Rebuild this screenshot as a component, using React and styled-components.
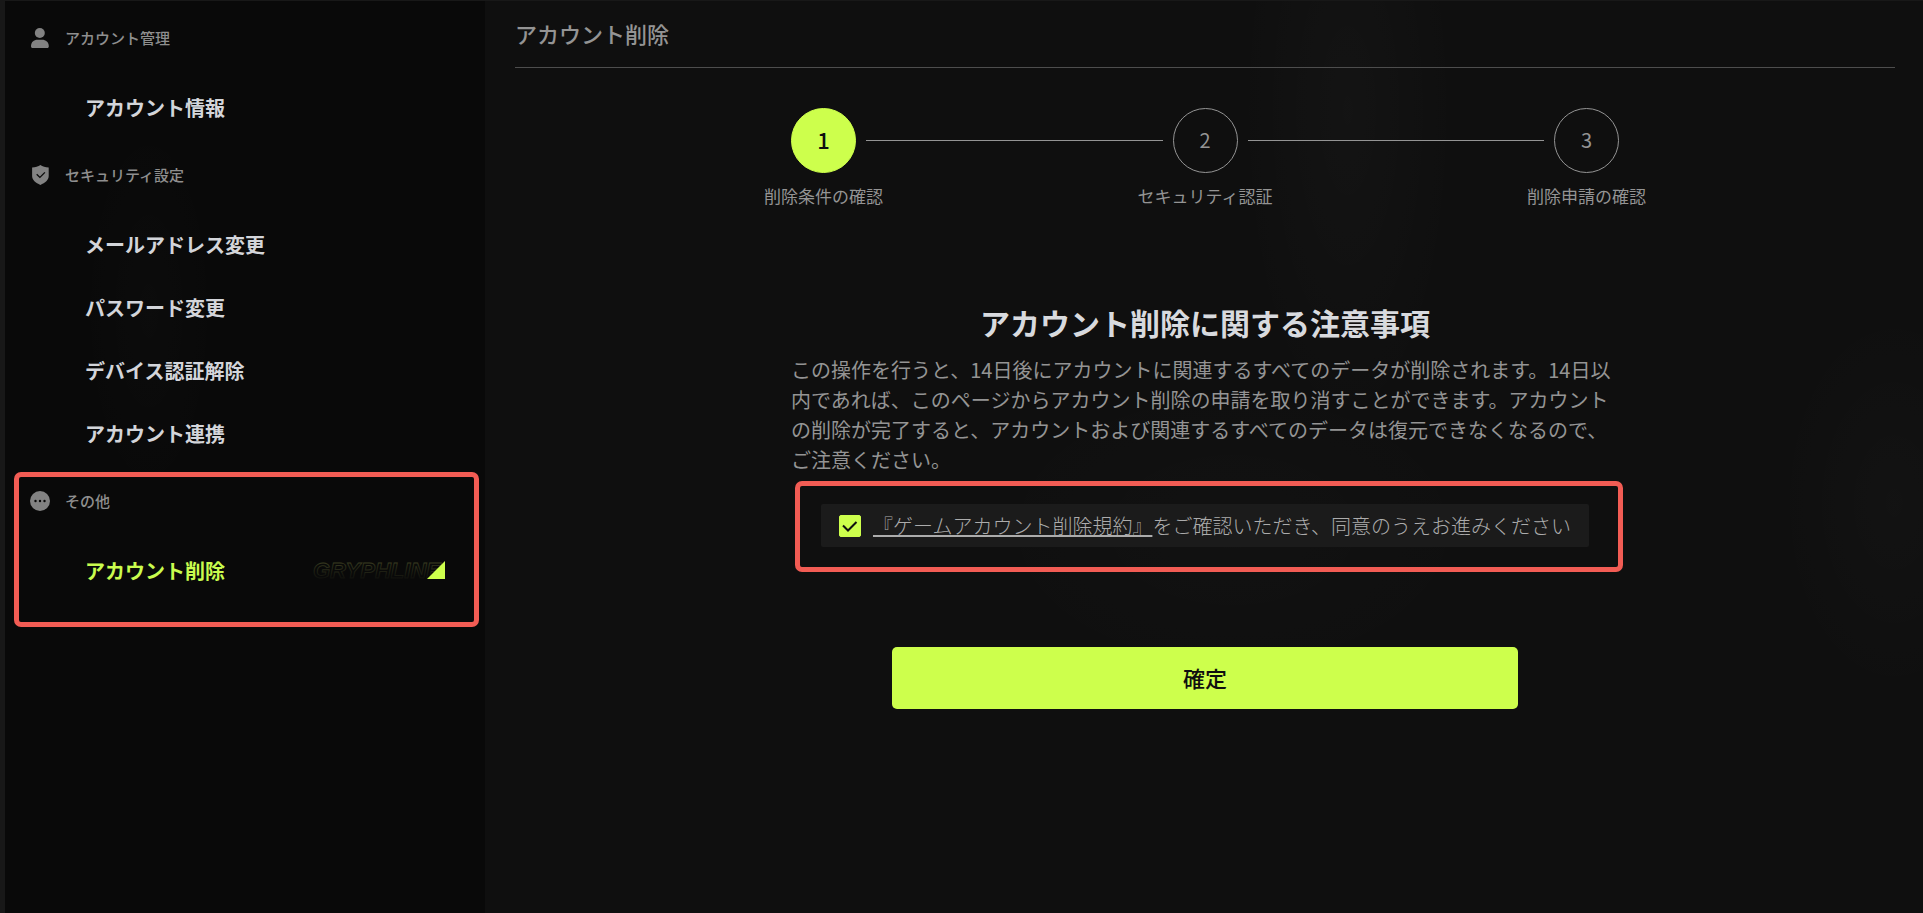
import { useState } from 'react';
import styled, { createGlobalStyle } from 'styled-components';

const GlobalStyle = createGlobalStyle`
  * {
    box-sizing: border-box;
  }
  body {
    margin: 0;
    background: #171717;
    font-family: "Noto Sans CJK JP", "Noto Sans", sans-serif;
  }
`

const Page = styled.div`
  display: flex;
  min-height: 100vh;
  padding: 1px 0 0 5px;
  background: #181818;
`

const Sidebar = styled.nav`
  flex: none;
  width: 480px;
  background:
    radial-gradient(ellipse 70px 200px at 30% 34%, rgba(255, 255, 255, 0.012), transparent),
    #090909;
`

const Section = styled.section`
  position: relative;
`

const SectionTitle = styled.h2`
  display: flex;
  align-items: center;
  gap: 15px;
  height: 75px;
  margin: 0;
  padding: 0 0 2px 25px;
  font-size: 15px;
  font-weight: 500;
  color: #8f8f8f;
`

const Icon = styled.svg`
  flex: none;
  width: 20px;
  height: 20px;
`

const NavList = styled.div`
  display: flex;
  flex-direction: column;
  gap: 1px;
`

const NavItem = styled.a`
  display: flex;
  align-items: center;
  justify-content: space-between;
  height: 62px;
  padding: 0 40px 0 80px;
  font-size: 20px;
  font-weight: 700;
  color: ${props => props.$active ? '#c9fc4e' : '#d3d5da'};
  text-decoration: none;
`

const Mark = styled.svg`
  width: 132px;
  height: 20px;
  overflow: visible;
`

const Highlight = styled.div`
  position: absolute;
  border: 5px solid #f25c54;
  border-radius: 7px;
  pointer-events: none;
`

const SidebarHighlight = styled(Highlight)`
  top: 8px;
  right: 6px;
  bottom: -26px;
  left: 9px;
`

const AgreementHighlight = styled(Highlight)`
  top: -23px;
  right: -4px;
  bottom: -25px;
  left: 4px;
`

const Main = styled.main`
  flex: 1;
  min-width: 0;
  padding: 0 28px 40px 30px;
  background:
    radial-gradient(ellipse 110px 330px at 60% 12%, rgba(255, 255, 255, 0.02), transparent),
    radial-gradient(ellipse 260px 160px at 52% 58%, rgba(255, 255, 255, 0.01), transparent),
    radial-gradient(ellipse 120px 200px at 98% 55%, rgba(255, 255, 255, 0.015), transparent),
    #0f0f0f;
`

const Title = styled.h1`
  display: flex;
  align-items: center;
  height: 67px;
  margin: 0;
  padding-bottom: 3px;
  border-bottom: 1px solid #4d4d4d;
  font-size: 22px;
  font-weight: 500;
  color: #949494;
`

const Content = styled.div`
  max-width: 828px;
  margin: 40px auto 0;
`

const Steps = styled.ol`
  display: flex;
  margin: 0;
  padding: 0;
  list-style: none;
`

const Step = styled.li`
  display: flex;
  flex: ${props => props.$last ? 'none' : '1'};
`

const StepBody = styled.div`
  display: flex;
  flex-direction: column;
  align-items: center;
  gap: 11px;
  width: 65px;
`

const StepCircle = styled.span`
  display: flex;
  align-items: center;
  justify-content: center;
  width: 65px;
  height: 65px;
  padding-bottom: 3px;
  border: 1px solid ${props => props.$active ? '#cdff4c' : '#949494'};
  border-radius: 50%;
  background: ${props => props.$active ? '#cdff4c' : 'transparent'};
  font-size: ${props => props.$active ? '22px' : '20px'};
  font-weight: ${props => props.$active ? '500' : '400'};
  color: ${props => props.$active ? '#0f0f0f' : '#949494'};
`

const StepLabel = styled.span`
  font-size: 17px;
  line-height: 24px;
  color: #949494;
  white-space: nowrap;
`

const StepLine = styled.span`
  flex: 1;
  height: 1px;
  margin: 32px 10px 0;
  background: #949494;
`

const Heading = styled.h2`
  margin: 92px 0 11px;
  font-size: 30px;
  font-weight: 700;
  line-height: 44px;
  color: #d8dade;
  text-align: center;
`

const Notice = styled.p`
  margin: 0;
  font-size: 20px;
  line-height: 30px;
  color: #949494;
`

const AgreementRow = styled.div`
  position: relative;
  display: flex;
  justify-content: center;
  margin-top: 29px;
`

const Agreement = styled.div`
  display: flex;
  align-items: center;
  gap: 12px;
  padding: 0 18px;
  border-radius: 2px;
  background: #1b1b1b;
  font-size: 20px;
  font-weight: 300;
  line-height: 43px;
  color: #acacac;
`

const AgreementLink = styled.a`
  color: inherit;
  text-decoration: underline;
  text-decoration-thickness: 2px;
  text-decoration-skip-ink: none;
  text-underline-offset: 1px;
`

const CheckWrap = styled.span`
  display: grid;
  flex: none;
  width: 22px;
  height: 22px;

  > * {
    grid-area: 1 / 1;
  }
`

const Checkbox = styled.input`
  appearance: none;
  width: 22px;
  height: 22px;
  margin: 0;
  border: 1px solid #cdff4c;
  border-radius: 2px;

  &:checked {
    background: #cdff4c;
  }
`

const CheckMark = styled.svg`
  width: 22px;
  height: 22px;
  pointer-events: none;
`

const SubmitButton = styled.button`
  display: block;
  width: 626px;
  max-width: 100%;
  height: 62px;
  margin: 100px auto 0;
  padding: 0 0 3px;
  border: none;
  border-radius: 5px;
  background: #cdff4c;
  font-family: inherit;
  font-size: 22px;
  font-weight: 500;
  color: #0f0f0f;
  cursor: pointer;

  &:disabled {
    opacity: 0.5;
  }
`

const UserIcon = () => (
  <Icon viewBox="0 0 20 20" fill="#828282" aria-hidden="true">
    <circle cx="9.8" cy="5" r="5" />
    <path d="M1 18.2C1 14 3.8 11.8 7.5 11.8h4.6c3.7 0 6.7 2.2 6.7 6.4 0 1.200-.6 1.800-1.600 1.800H2.600C1.600 20 1 19.400 1 18.200z" />
  </Icon>
)

const ShieldIcon = () => (
  <Icon viewBox="0 0 20 20" aria-hidden="true">
    <path d="M10.4 0C12.5 1.5 15.5 2.3 18.7 2.5V11c0 4-3.500 6.800-8.300 8.900C5.600 17.800 2.100 15 2.100 11V2.500C5.300 2.300 8.300 1.500 10.400 0z" fill="#828282" />
    <path d="M6.7 9.2l3.200 3.200 5-5" fill="none" stroke="#090909" strokeWidth="1.3" />
  </Icon>
)

const MoreIcon = () => (
  <Icon viewBox="0 0 20 20" aria-hidden="true">
    <circle cx="10" cy="10" r="10" fill="#828282" />
    <g fill="#090909">
      <circle cx="5.5" cy="10" r="1.2" />
      <circle cx="10" cy="10" r="1.2" />
      <circle cx="14.5" cy="10" r="1.2" />
    </g>
  </Icon>
)

const ActiveMark = () => (
  <Mark viewBox="0 0 132 20" aria-hidden="true">
    <defs>
      <linearGradient id="fade" x1="0" y1="0" x2="0" y2="20" gradientUnits="userSpaceOnUse">
        <stop offset="0" stopColor="#d8e070" stopOpacity="0.26" />
        <stop offset="0.95" stopColor="#d8e070" stopOpacity="0.03" />
      </linearGradient>
    </defs>
    <text
      x="0"
      y="18"
      fill="none"
      stroke="url(#fade)"
      strokeWidth="0.8"
      fontFamily="Liberation Sans, sans-serif"
      fontSize="22"
      fontWeight="700"
      fontStyle="italic"
    >
      GRYPHLINE
    </text>
    <path d="M132 1v18h-18z" fill="#cdff4c" />
  </Mark>
)

const sections = [
  { title: 'アカウント管理', icon: UserIcon, items: ['アカウント情報'] },
  {
    title: 'セキュリティ設定',
    icon: ShieldIcon,
    items: ['メールアドレス変更', 'パスワード変更', 'デバイス認証解除', 'アカウント連携'],
  },
  { title: 'その他', icon: MoreIcon, items: ['アカウント削除'], highlighted: true },
]

const steps = ['削除条件の確認', 'セキュリティ認証', '削除申請の確認']

const App = () => {
  const [current, setCurrent] = useState('アカウント削除')
  const [agreed, setAgreed] = useState(true)

  return (
    <Page lang="ja">
      <GlobalStyle />
      <Sidebar>
        {sections.map(({ title, icon: SectionIcon, items, highlighted }) => (
          <Section key={title}>
            <SectionTitle>
              <SectionIcon />
              {title}
            </SectionTitle>
            <NavList>
              {items.map(item => (
                <NavItem key={item} href="#" $active={item === current} onClick={() => setCurrent(item)}>
                  {item}
                  {item === current && <ActiveMark />}
                </NavItem>
              ))}
            </NavList>
            {highlighted && <SidebarHighlight />}
          </Section>
        ))}
      </Sidebar>

      <Main>
        <Title>アカウント削除</Title>
        <Content>
          <Steps>
            {steps.map((label, i) => (
              <Step key={label} $last={i === steps.length - 1}>
                <StepBody>
                  <StepCircle $active={i === 0}>{i + 1}</StepCircle>
                  <StepLabel>{label}</StepLabel>
                </StepBody>
                {i < steps.length - 1 && <StepLine />}
              </Step>
            ))}
          </Steps>

          <Heading>アカウント削除に関する注意事項</Heading>
          <Notice>
            この操作を行うと、14日後にアカウントに関連するすべてのデータが削除されます。14日以内であれば、このページからアカウント削除の申請を取り消すことができます。アカウントの削除が完了すると、アカウントおよび関連するすべてのデータは復元できなくなるので、ご注意ください。
          </Notice>

          <AgreementRow>
            <Agreement>
              <CheckWrap>
                <Checkbox
                  type="checkbox"
                  id="agree"
                  checked={agreed}
                  onChange={e => setAgreed(e.target.checked)}
                />
                {agreed && (
                  <CheckMark viewBox="0 0 22 22" aria-hidden="true">
                    <path d="M4 10.5l5 5L17.5 7" fill="none" stroke="#0f0f0f" strokeWidth="2" />
                  </CheckMark>
                )}
              </CheckWrap>
              <label htmlFor="agree">
                <AgreementLink href="#">『ゲームアカウント削除規約』</AgreementLink>
                をご確認いただき、同意のうえお進みください
              </label>
            </Agreement>
            <AgreementHighlight />
          </AgreementRow>

          <SubmitButton type="button" disabled={!agreed}>確定</SubmitButton>
        </Content>
      </Main>
    </Page>
  )
}

export default App
